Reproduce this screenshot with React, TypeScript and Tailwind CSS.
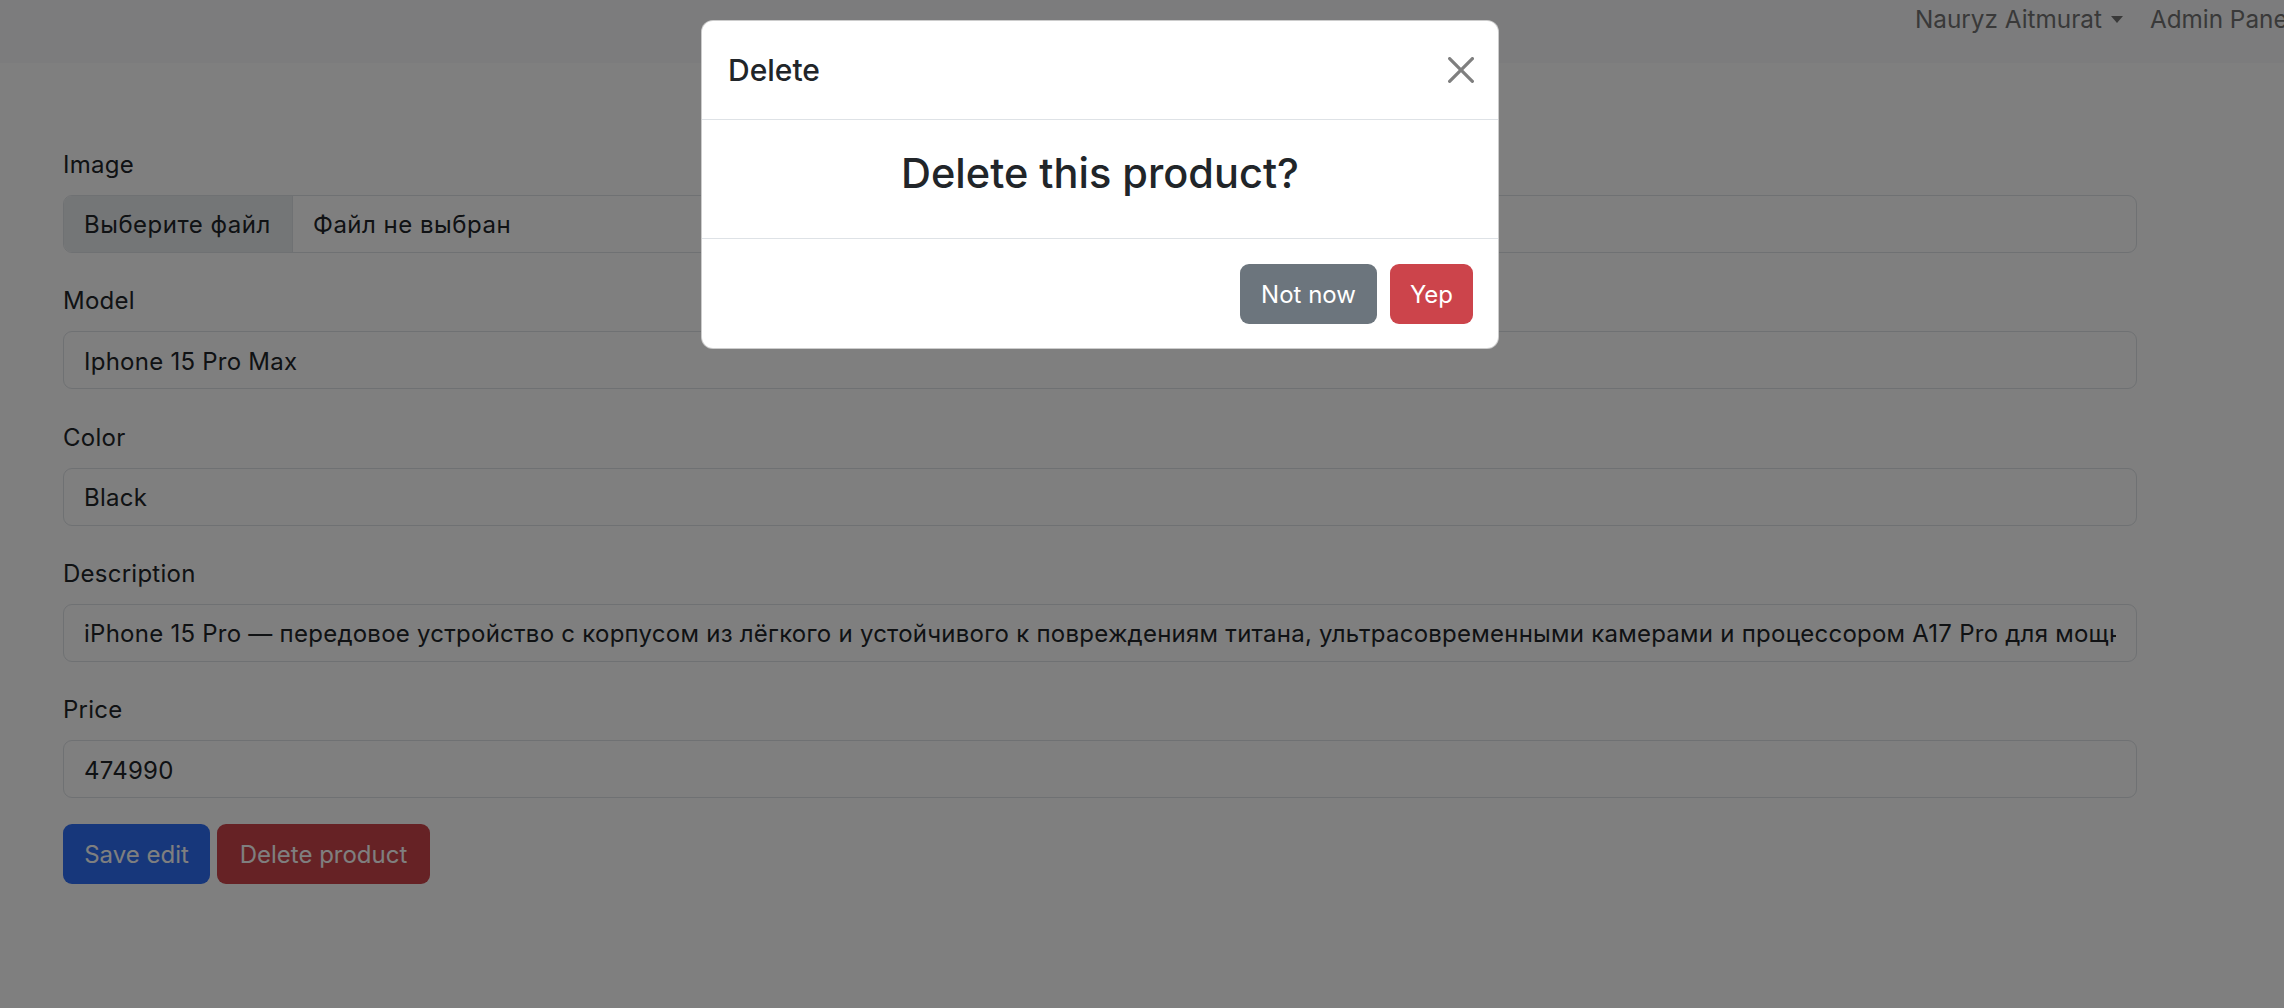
import React from "react";

const fields = [
  { label: "Model", value: "Iphone 15 Pro Max" },
  { label: "Color", value: "Black" },
  {
    label: "Description",
    value:
      "iPhone 15 Pro — передовое устройство с корпусом из лёгкого и устойчивого к повреждениям титана, ультрасовременными камерами и процессором A17 Pro для мощной производительности и потрясающей графики.",
  },
  { label: "Price", value: "474990" },
];

function CloseIcon() {
  return (
    <svg viewBox="0 0 16 16" className="w-[26px] h-[26px]" aria-hidden="true">
      <path
        fill="#000"
        fillOpacity="0.5"
        d="M.293.293a1 1 0 0 1 1.414 0L8 6.586 14.293.293a1 1 0 1 1 1.414 1.414L9.414 8l6.293 6.293a1 1 0 0 1-1.414 1.414L8 9.414l-6.293 6.293a1 1 0 0 1-1.414-1.414L6.586 8 .293 1.707a1 1 0 0 1 0-1.414z"
      />
    </svg>
  );
}

export default function App() {
  return (
    <div className="relative w-[2284px] h-[1008px] overflow-hidden bg-white font-['Inter',sans-serif] text-[#212529]">
      {/* Navbar */}
      <nav className="h-[63px] bg-[#f8f9fa] flex items-start pl-[1915px] pt-[2px] whitespace-nowrap text-[24.3px] leading-[35px] text-[#737373]">
        <div className="flex items-center">
          <span>Nauryz Aitmurat</span>
          <span className="ml-[9px] w-0 h-0 border-l-[6px] border-r-[6px] border-t-[7px] border-l-transparent border-r-transparent border-t-[#737373]" />
        </div>
        <span className="ml-[27px]">Admin Panel</span>
      </nav>

      {/* Form */}
      <main className="pl-[63px] pt-[85px] tracking-[0.25px]">
        <div className="w-[2074px] flex flex-col gap-[31.33px]">
          <div>
            <label className="block h-[34px] text-[24px] leading-[34px]">Image</label>
            <div className="mt-[13px] h-[58px] flex border border-[#dee2e6] rounded-[9px] overflow-hidden text-[24px] tracking-[0.5px]">
              <div className="w-[229px] shrink-0 bg-[#e9ecef] border-r border-[#dee2e6] pl-[20px] pt-[2px] flex items-center">
                Выберите файл
              </div>
              <div className="px-[20px] pt-[2px] flex items-center">Файл не выбран</div>
            </div>
          </div>
          {fields.map((f) => (
            <div key={f.label}>
              <label className="block h-[34px] text-[24px] leading-[34px]">{f.label}</label>
              <input
                readOnly
                value={f.value}
                className="mt-[13px] block w-full h-[58px] border border-[#dee2e6] rounded-[9px] px-[20px] pt-[2px] text-[24px] bg-white text-[#212529] outline-none tracking-[0.25px]"
              />
            </div>
          ))}
        </div>
        <div className="mt-[26px] flex gap-[7px] tracking-normal">
          <button className="w-[147px] h-[60px] pt-[2px] rounded-[9px] bg-[#2e6ef6] text-white text-[24px]">
            Save edit
          </button>
          <button className="w-[213px] h-[60px] pt-[2px] rounded-[9px] bg-[#cc444b] text-white text-[24px]">
            Delete product
          </button>
        </div>
      </main>

      {/* Backdrop */}
      <div className="absolute inset-0 bg-black/50" />

      {/* Modal */}
      <div className="absolute inset-0 pl-[701px] pt-[20px]">
        <div className="w-[798px] bg-white rounded-[12px] border border-black/20 overflow-hidden">
          <div className="h-[99px] border-b border-[#dee2e6] flex items-center justify-between pl-[26px] pr-[24px]">
            <h5 className="text-[30px] font-medium leading-[46px]">Delete</h5>
            <CloseIcon />
          </div>
          <div className="h-[118px] pt-[27px] text-center">
            <h3 className="text-[41.5px] font-medium leading-[52px]">Delete this product?</h3>
          </div>
          <div className="h-[110px] border-t border-[#dee2e6] flex items-center justify-end gap-[13px] pr-[25px]">
            <button className="w-[137px] h-[60px] pt-[2px] rounded-[9px] bg-[#6c757d] text-white text-[24px]">
              Not now
            </button>
            <button className="w-[83px] h-[60px] pt-[2px] rounded-[9px] bg-[#cc444b] text-white text-[24px]">
              Yep
            </button>
          </div>
        </div>
      </div>
    </div>
  );
}
